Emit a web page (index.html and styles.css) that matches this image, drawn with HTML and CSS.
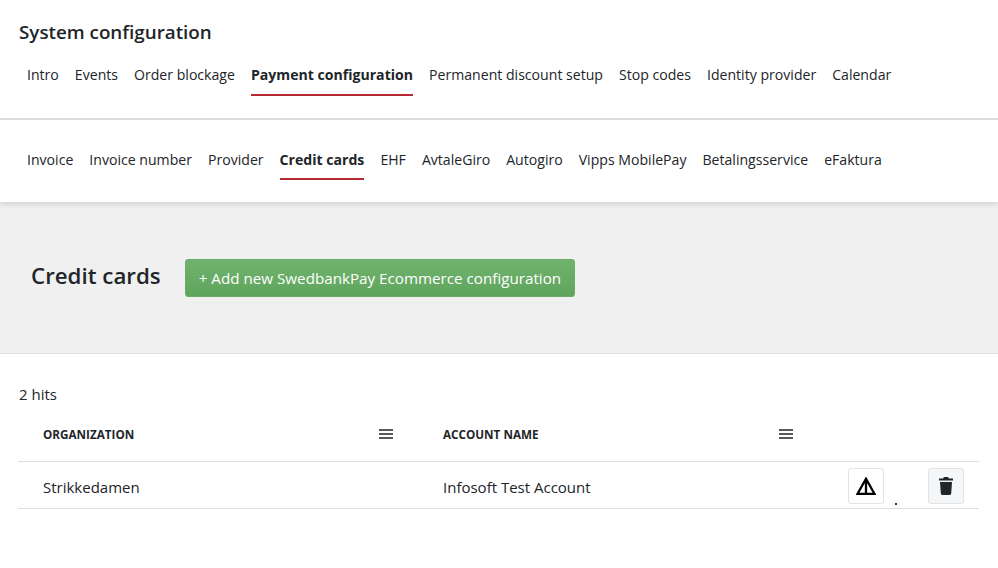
FILE: index.html
```html
<!DOCTYPE html>
<html lang="en">
<head>
<meta charset="utf-8">
<title>Credit cards</title>
<link rel="stylesheet" href="styles.css">
</head>
<body>
<header class="top">
  <h1 class="title">System configuration</h1>
  <nav class="tabs">
    <a class="tab">Intro</a><a class="tab">Events</a><a class="tab">Order blockage</a><a class="tab active">Payment configuration</a><a class="tab">Permanent discount setup</a><a class="tab">Stop codes</a><a class="tab">Identity provider</a><a class="tab">Calendar</a>
  </nav>
</header>
<nav class="tabs sub">
  <a class="tab">Invoice</a><a class="tab">Invoice number</a><a class="tab">Provider</a><a class="tab active">Credit cards</a><a class="tab">EHF</a><a class="tab">AvtaleGiro</a><a class="tab">Autogiro</a><a class="tab">Vipps MobilePay</a><a class="tab">Betalingsservice</a><a class="tab">eFaktura</a>
</nav>
<section class="band">
  <h2 class="band-title">Credit cards</h2>
  <button class="add">+ Add new SwedbankPay Ecommerce configuration</button>
</section>
<main class="content">
  <p class="hits">2 hits</p>
  <div class="row head">
    <div class="col"><span>ORGANIZATION</span><svg class="menu" viewBox="0 0 14 10"><path d="M0 1h14M0 5h14M0 9h14"/></svg></div>
    <div class="col"><span>ACCOUNT NAME</span><svg class="menu" viewBox="0 0 14 10"><path d="M0 1h14M0 5h14M0 9h14"/></svg></div>
  </div>
  <div class="row body">
    <div class="col">Strikkedamen</div>
    <div class="col">Infosoft Test Account</div>
    <div class="actions">
      <button class="icon"><svg viewBox="0 0 20 18" width="20" height="18"><path class="warn" d="M10 1.800 1.600 16.800h16.800ZM10 2v14.800"/></svg></button>
      <span class="dot"></span>
      <button class="icon grey"><svg viewBox="0 0 14 18" width="14" height="18"><path d="M5 0h4l1 1.500h4V3.600H0V1.500h4ZM1 5h12l-.8 11.600A1.500 1.500 0 0 1 10.700 18H3.300a1.500 1.500 0 0 1-1.500-1.400Z"/></svg></button>
    </div>
  </div>
</main>
</body>
</html>
```
FILE: styles.css
```css
* { box-sizing: border-box; }
html, body { margin: 0; padding: 0; }
body {
  background: #fff;
  color: #212529;
  font-family: "Open Sans", "Noto Sans", sans-serif;
  font-size: 14.100px;
  height: 568px;
  overflow: hidden;
}
.top {
  height: 120px;
  padding: 19px 19px 0;
  border-bottom: 2px solid #e2e2e2;
}
.title {
  margin: 0 0 15px;
  font-size: 18.800px;
  line-height: 27px;
  font-weight: 600;
}
.tabs { display: flex; padding-left: 8px; gap: 16px; }
.tab {
  display: block;
  height: 35px;
  line-height: 27px;
  white-space: nowrap;
}
.tab.active {
  font-weight: 700;
  border-bottom: 2px solid #b52a34;
}
.sub {
  height: 82px;
  padding: 26px 0 0 27px;
  box-shadow: 0 2px 6px rgba(0,0,0,.14);
  position: relative;
}
.sub .tab { height: 34px; }
.band {
  height: 152px;
  background: #f0f0f0;
  border-bottom: 1px solid #e0e0e0;
  padding: 57px 0 0 31px;
  display: flex;
  align-items: flex-start;
  gap: 24px;
}
.band-title {
  margin: 0;
  font-size: 22.300px;
  line-height: 34px;
  font-weight: 600;
}
.add {
  height: 38px;
  padding: 0 13px;
  color: #fff;
  font: 15.200px "Open Sans", sans-serif;
  border: 1px solid #6aa968;
  border-radius: 3px;
  background: linear-gradient(#70b36d, #5fa45d);
}
.content { padding: 29px 19px 0 18px; }
.hits { margin: 0 0 10px 1px; line-height: 22px; font-size: 15px; }
.row { display: flex; width: 961px; position: relative; }
.head { height: 47px; border-bottom: 1px solid #dfdfdf; align-items: center; }
.head .col { font-size: 11.700px; font-weight: 700; padding-bottom: 9px; }
.col {
  width: 400px;
  padding: 0 25px;
  display: flex;
  justify-content: space-between;
  align-items: center;
}
.body { height: 47px; padding-top: 4px; border-bottom: 1px solid #dfdfdf; align-items: center; font-size: 15px; }
.menu { width: 14px; height: 10px; fill: none; stroke: #212529; stroke-width: 1.500; }
.actions {
  position: absolute;
  left: 830px;
  top: 6px;
  display: flex;
  gap: 44px;
}
.icon {
  width: 36px;
  height: 36px;
  padding: 0;
  display: flex;
  align-items: center;
  justify-content: center;
  background: #fff;
  border: 1px solid #e3e3e3;
  border-radius: 3px;
}
.icon.grey { background: #f5f6f8; fill: #212529; }
.warn { fill: none; stroke: #000; stroke-width: 2.300; }
.dot {
  position: absolute;
  left: 47px;
  top: 35px;
  width: 2px;
  height: 2px;
  background: #333;
}
```
